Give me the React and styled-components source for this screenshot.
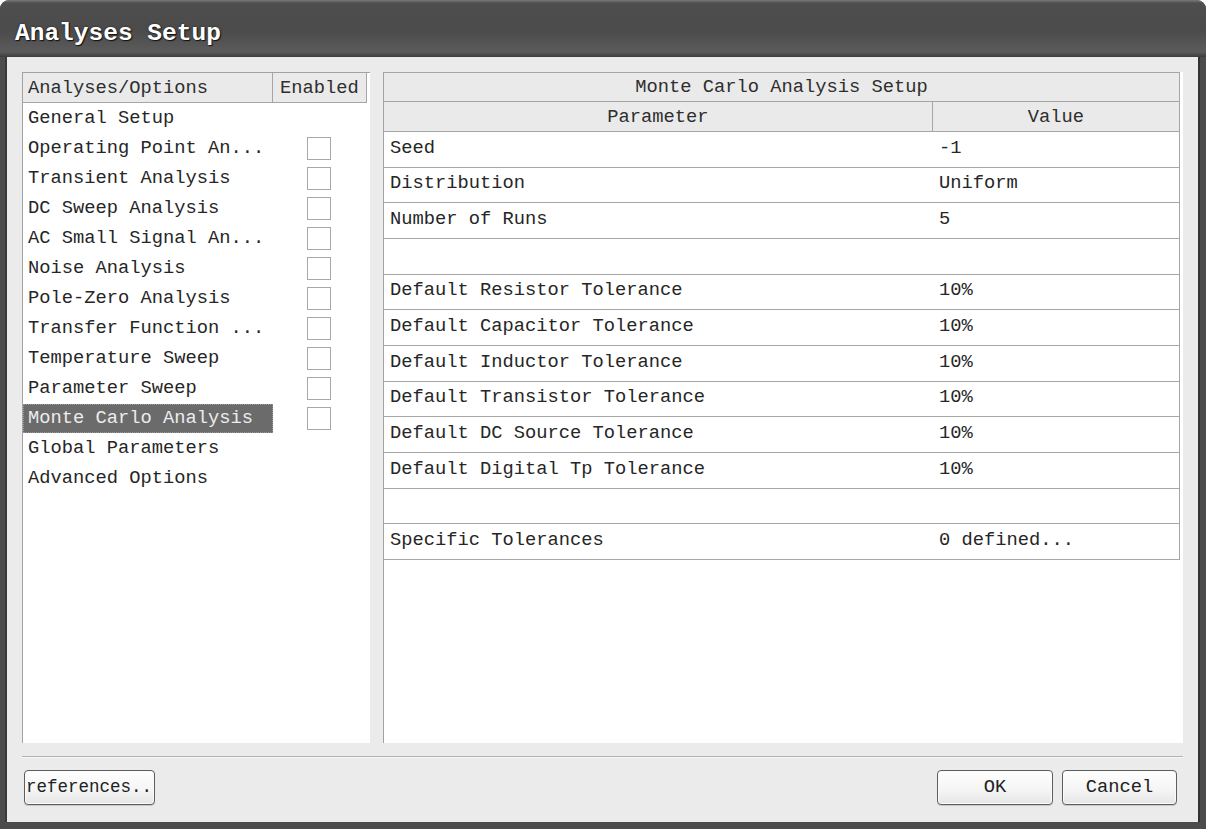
import styled, { createGlobalStyle } from 'styled-components';

const GlobalStyle = createGlobalStyle`
  html, body {
    margin: 0;
    padding: 0;
    background: #ffffff;
  }
  * {
    box-sizing: border-box;
  }
`;

const mono = `"Liberation Mono", "DejaVu Sans Mono", monospace`;

const Window = styled.div`
  width: 1206px;
  height: 829px;
  display: flex;
  flex-direction: column;
  font-family: ${mono};
  font-size: 18.75px;
  color: #262626;
  background: #4c4c4c;
  border-radius: 9px 9px 0 0;
  overflow: hidden;
`;

const TitleBar = styled.div`
  height: 57px;
  flex: none;
  display: flex;
  align-items: center;
  padding: 10px 15px 0;
  background: linear-gradient(to bottom, #7a7a7a 0px, #4e4e4e 3px, #4b4b4b 30px, #5b5b5b 52px, #3c3c3c 57px);
`;

const Title = styled.div`
  font-family: ${mono};
  font-weight: bold;
  font-size: 24.5px;
  color: #ffffff;
  text-shadow: 1px 1px 1px #111, 0 0 2px #222;
`;

const Body = styled.div`
  flex: 1;
  display: flex;
  flex-direction: column;
  margin: 0 8px 7px 7px;
  padding: 15px 15px 0 15px;
  background: #ebebeb;
  box-shadow: -2px 0 0 #3a3a3a, 2px 0 0 #333;
`;

const Panels = styled.div`
  height: 671px;
  display: flex;
  gap: 13px;
`;

const ListBox = styled.div`
  width: 348px;
  display: flex;
  flex-direction: column;
  background: #ffffff;
  border-left: 1px solid #a2a2a2;
  border-top: 1px solid #a2a2a2;
`;

const TableBox = styled.div`
  flex: 1;
  display: flex;
  flex-direction: column;
  background: #ffffff;
  border-left: 1px solid #a2a2a2;
`;

const HeaderRow = styled.div`
  display: flex;
  height: 30px;
  margin-right: ${({ $inset }) => ($inset ? '3px' : '0')};
  background: #eaeaea;
  border-bottom: 1px solid #a6a6a6;
  border-right: 1px solid #a6a6a6;
  border-top: ${({ $top }) => ($top ? '1px solid #a6a6a6' : 'none')};
`;

const HeaderCell = styled.div`
  display: flex;
  align-items: center;
  justify-content: ${({ $center }) => ($center ? 'center' : 'flex-start')};
  padding-left: ${({ $center }) => ($center ? '0' : '5px')};
  width: ${({ $w }) => ($w ? `${$w}px` : 'auto')};
  flex: ${({ $w }) => ($w ? 'none' : '1')};
  border-right: ${({ $divider }) => ($divider ? '1px solid #a6a6a6' : 'none')};
  color: #2e2e2e;
  white-space: nowrap;
`;

const ListRow = styled.div`
  display: flex;
  align-items: center;
  height: 30px;
`;

const ListLabel = styled.div`
  width: 250px;
  height: 29px;
  display: flex;
  align-items: center;
  padding-left: 5px;
  white-space: nowrap;
  background: ${({ $selected }) => ($selected ? '#6b6b6b' : 'transparent')};
  color: ${({ $selected }) => ($selected ? '#ececec' : '#262626')};
  outline: ${({ $selected }) => ($selected ? '1px dotted #9a9a9a' : 'none')};
  outline-offset: -1px;
`;

const CheckCell = styled.div`
  flex: 1;
  display: flex;
  justify-content: center;
  padding-right: 6px;
`;

const CheckBox = styled.div`
  width: 24px;
  height: 23px;
  border: 1px solid #a8a8a8;
  background: #ffffff;
`;

const DataRows = styled.div`
  display: flex;
  flex-direction: column;
`;

const DataRow = styled.div`
  display: flex;
  height: 35.67px;
  border-bottom: 1px solid #a6a6a6;
  border-right: 1px solid #a6a6a6;
  margin-right: 3px;
`;

const DataCell = styled.div`
  display: flex;
  align-items: center;
  padding: 0 0 3px ${({ $pad }) => $pad}px;
  width: ${({ $w }) => ($w ? `${$w}px` : 'auto')};
  flex: ${({ $w }) => ($w ? 'none' : '1')};
  white-space: nowrap;
`;

const Separator = styled.div`
  margin-top: 13px;
  height: 2px;
  border-top: 1px solid #b2b2b2;
  border-bottom: 1px solid #f6f6f6;
`;

const ButtonRow = styled.div`
  display: flex;
  align-items: center;
  padding-top: 12px;
  padding-left: 2px;
  padding-right: 6px;
`;

const Button = styled.button`
  height: 35px;
  width: ${({ $w }) => $w}px;
  margin-left: ${({ $gap }) => ($gap ? `${$gap}px` : '0')};
  display: flex;
  align-items: center;
  justify-content: ${({ $left }) => ($left ? 'flex-start' : 'center')};
  padding: 0 0 2px ${({ $left }) => ($left ? '1px' : '0')};
  border: 1px solid #5e5e5e;
  border-radius: 4px;
  background: linear-gradient(to bottom, #ffffff 0%, #f4f4f4 60%, #e6e6e6 100%);
  box-shadow: inset 0 0 0 1px #fafafa, 0 1px 0 #c8c8c8;
  font-family: ${mono};
  font-size: ${({ $small }) => ($small ? '17.5px' : '18.75px')};
  color: #222;
  white-space: nowrap;
`;

const Spacer = styled.div`
  flex: 1;
`;

const analyses = [
  { name: 'General Setup', check: false },
  { name: 'Operating Point An...', check: true },
  { name: 'Transient Analysis', check: true },
  { name: 'DC Sweep Analysis', check: true },
  { name: 'AC Small Signal An...', check: true },
  { name: 'Noise Analysis', check: true },
  { name: 'Pole-Zero Analysis', check: true },
  { name: 'Transfer Function ...', check: true },
  { name: 'Temperature Sweep', check: true },
  { name: 'Parameter Sweep', check: true },
  { name: 'Monte Carlo Analysis', check: true, selected: true },
  { name: 'Global Parameters', check: false },
  { name: 'Advanced Options', check: false },
];

const params = [
  ['Seed', '-1'],
  ['Distribution', 'Uniform'],
  ['Number of Runs', '5'],
  ['', ''],
  ['Default Resistor Tolerance', '10%'],
  ['Default Capacitor Tolerance', '10%'],
  ['Default Inductor Tolerance', '10%'],
  ['Default Transistor Tolerance', '10%'],
  ['Default DC Source Tolerance', '10%'],
  ['Default Digital Tp Tolerance', '10%'],
  ['', ''],
  ['Specific Tolerances', '0 defined...'],
];

const App = () => {
  return (
    <>
      <GlobalStyle />
      <Window>
        <TitleBar>
          <Title>Analyses Setup</Title>
        </TitleBar>
        <Body>
          <Panels>
            <ListBox>
              <HeaderRow $inset>
                <HeaderCell $w={250} $divider>Analyses/Options</HeaderCell>
                <HeaderCell $center>Enabled</HeaderCell>
              </HeaderRow>
              {analyses.map((a) => (
                <ListRow key={a.name}>
                  <ListLabel $selected={a.selected}>{a.name}</ListLabel>
                  <CheckCell>{a.check && <CheckBox />}</CheckCell>
                </ListRow>
              ))}
            </ListBox>
            <TableBox>
              <HeaderRow $inset $top>
                <HeaderCell $center>Monte Carlo Analysis Setup</HeaderCell>
              </HeaderRow>
              <HeaderRow $inset>
                <HeaderCell $w={549} $center $divider>Parameter</HeaderCell>
                <HeaderCell $center>Value</HeaderCell>
              </HeaderRow>
              <DataRows>
                {params.map(([p, v], i) => (
                  <DataRow key={i}>
                    <DataCell $w={549} $pad={6}>{p}</DataCell>
                    <DataCell $pad={6}>{v}</DataCell>
                  </DataRow>
                ))}
              </DataRows>
            </TableBox>
          </Panels>
          <Separator />
          <ButtonRow>
            <Button $w={131} $left $small>references..</Button>
            <Spacer />
            <Button $w={116}>OK</Button>
            <Button $w={115} $gap={9}>Cancel</Button>
          </ButtonRow>
        </Body>
      </Window>
    </>
  );
};

export default App;
